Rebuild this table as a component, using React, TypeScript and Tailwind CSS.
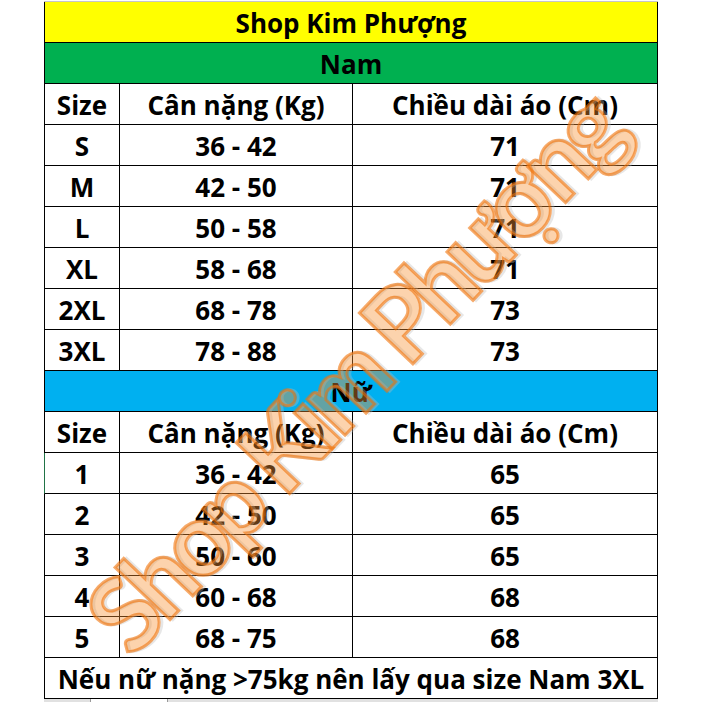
import React from "react";

const men = [
  ["S", "36 - 42", "71"],
  ["M", "42 - 50", "71"],
  ["L", "50 - 58", "71"],
  ["XL", "58 - 68", "71"],
  ["2XL", "68 - 78", "73"],
  ["3XL", "78 - 88", "73"],
];

const women = [
  ["1", "36 - 42", "65"],
  ["2", "42 - 50", "65"],
  ["3", "50 - 60", "65"],
  ["4", "60 - 68", "68"],
  ["5", "68 - 75", "68"],
];

const cell = "flex items-center justify-center pt-[3px]";

function DataRow({ cells, selected }: { cells: string[]; selected?: boolean }) {
  return (
    <div
      className={`flex h-[41px] border-b border-l border-r border-black ${
        selected ? "border-l-[#217346]" : ""
      }`}
    >
      <div className={`${cell} w-[75px] border-r border-black`}>{cells[0]}</div>
      <div className={`${cell} w-[233px] border-r border-black`}>{cells[1]}</div>
      <div className={`${cell} flex-1`}>{cells[2]}</div>
    </div>
  );
}

function BandRow({ text, bg }: { text: string; bg: string }) {
  return (
    <div
      className={`flex h-[41px] items-center justify-center border-b border-l border-r border-black pt-[3px] ${bg}`}
    >
      {text}
    </div>
  );
}

// watermark laid diagonally over the sheet
function Watermark() {
  const common = {
    x: 356,
    y: 407,
    textAnchor: "middle" as const,
    fontFamily: "Lato, 'Open Sans', sans-serif",
    fontWeight: 700,
    fontSize: 102,
    textLength: 728,
    lengthAdjust: "spacing" as const,
  };
  return (
    <svg
      className="pointer-events-none absolute left-0 top-0"
      width="702"
      height="702"
      viewBox="0 0 702 702"
    >
      <g transform="rotate(-46.5 356 370)">
        <text
          {...common}
          x={358}
          y={409}
          fill="none"
          stroke="#bdbdbd"
          strokeWidth="3"
          opacity="0.35"
        >
          Shop Kim Phượng
        </text>
        <text
          {...common}
          fill="rgba(247,145,50,0.4)"
          stroke="rgba(240,115,10,0.6)"
          strokeWidth="3"
        >
          Shop Kim Phượng
        </text>
      </g>
    </svg>
  );
}

export default function App() {
  return (
    <div className="relative h-[702px] w-[702px] overflow-hidden bg-white font-['Open_Sans','Lato',sans-serif] text-[26px] font-bold text-black">
      <div className="ml-[44px] h-[2px] w-[614px] border-b border-[#c6c6c6]" />
      <div className="ml-[44px] w-[614px]">
        <BandRow text="Shop Kim Phượng" bg="bg-[#ffff00] text-[26px]" />
        <BandRow text="Nam" bg="bg-[#00b050]" />
        <DataRow cells={["Size", "Cân nặng (Kg)", "Chiều dài áo (Cm)"]} />
        {men.map((r) => (
          <DataRow key={r[0]} cells={r} />
        ))}
        <BandRow text="Nữ" bg="bg-[#00b0f0]" />
        <DataRow cells={["Size", "Cân nặng (Kg)", "Chiều dài áo (Cm)"]} />
        {women.map((r, i) => (
          <DataRow key={r[0]} cells={r} selected={i === 0} />
        ))}
        <BandRow text="Nếu nữ nặng >75kg nên lấy qua size Nam 3XL" bg="bg-white" />
      </div>
      <div className="ml-[44px] flex h-[3px] w-[614px]">
        <div className="w-[46px] bg-[#e1e1e1]" />
        <div className="w-[78px] border-x border-[#9a9a9a] bg-white" />
        <div className="flex-1 bg-[#e1e1e1]" />
      </div>
      <Watermark />
    </div>
  );
}
